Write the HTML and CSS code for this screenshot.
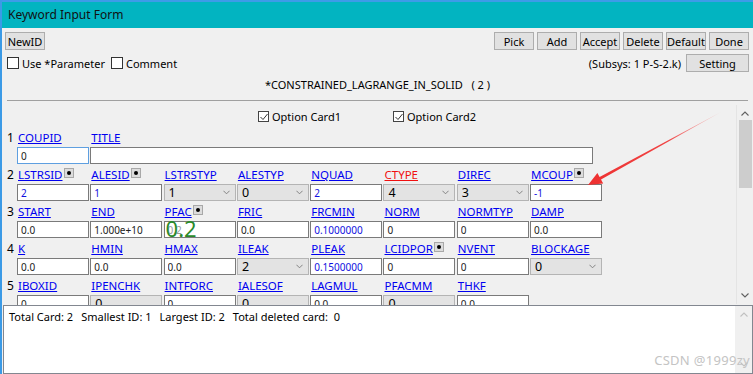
FILE: index.html
```html
<!DOCTYPE html>
<html lang="en">
<head>
    <meta charset="UTF-8">
    <meta name="viewport" content="width=device-width, initial-scale=1.0">
    <title>Keyword Input Form</title>
    <link rel="stylesheet" href="styles.css">
</head>
<body>
    <div class="window">
        <div class="titlebar">Keyword Input Form</div>

        <div class="toolbar">
            <button class="btn newid">NewID</button>
            <div class="btn-group">
                <button class="btn">Pick</button>
                <button class="btn">Add</button>
                <button class="btn">Accept</button>
                <button class="btn">Delete</button>
                <button class="btn">Default</button>
                <button class="btn">Done</button>
            </div>
        </div>

        <div class="optbar">
            <label class="check first"><span class="box"></span>Use *Parameter</label>
            <label class="check"><span class="box"></span>Comment</label>
            <span class="subsys">(Subsys: 1 P-S-2.k)</span>
            <button class="btn setting">Setting</button>
        </div>

        <div class="kwtitle">*CONSTRAINED_LAGRANGE_IN_SOLID &nbsp;&nbsp;( 2 )</div>
        <div class="sep"></div>

        <div class="cards">
            <div class="cards-body">
                <div class="options">
                    <label class="check"><span class="box checked"><svg viewBox="0 0 10 10"><polyline points="1.5,5 4,7.5 8.5,2"/></svg></span>Option Card1</label>
                    <label class="check"><span class="box checked"><svg viewBox="0 0 10 10"><polyline points="1.5,5 4,7.5 8.5,2"/></svg></span>Option Card2</label>
                </div>

                <!-- card 1 -->
                <div class="card-labels">
                    <span class="num">1</span>
                    <span class="lbl"><u>COUPID</u></span>
                    <span class="lbl"><u>TITLE</u></span>
                </div>
                <div class="card-fields">
                    <input class="fld focus" value="0">
                    <input class="fld title" value="">
                </div>

                <!-- card 2 -->
                <div class="card-labels">
                    <span class="num">2</span>
                    <span class="lbl"><u>LSTRSID</u><span class="dot"></span></span>
                    <span class="lbl"><u>ALESID</u><span class="dot"></span></span>
                    <span class="lbl"><u>LSTRSTYP</u></span>
                    <span class="lbl"><u>ALESTYP</u></span>
                    <span class="lbl"><u>NQUAD</u></span>
                    <span class="lbl red"><u>CTYPE</u></span>
                    <span class="lbl"><u>DIREC</u></span>
                    <span class="lbl"><u>MCOUP</u><span class="dot"></span></span>
                </div>
                <div class="card-fields">
                    <input class="fld blue" value="2">
                    <input class="fld blue" value="1">
                    <div class="combo"><span>1</span><svg viewBox="0 0 8 5"><polyline points="0.5,0.5 4,4 7.5,0.5"/></svg></div>
                    <div class="combo"><span>0</span><svg viewBox="0 0 8 5"><polyline points="0.5,0.5 4,4 7.5,0.5"/></svg></div>
                    <input class="fld blue" value="2">
                    <div class="combo"><span>4</span><svg viewBox="0 0 8 5"><polyline points="0.5,0.5 4,4 7.5,0.5"/></svg></div>
                    <div class="combo"><span>3</span><svg viewBox="0 0 8 5"><polyline points="0.5,0.5 4,4 7.5,0.5"/></svg></div>
                    <input class="fld blue" value="-1">
                </div>

                <!-- card 3 -->
                <div class="card-labels">
                    <span class="num">3</span>
                    <span class="lbl"><u>START</u></span>
                    <span class="lbl"><u>END</u></span>
                    <span class="lbl"><u>PFAC</u><span class="dot"></span></span>
                    <span class="lbl"><u>FRIC</u></span>
                    <span class="lbl"><u>FRCMIN</u></span>
                    <span class="lbl"><u>NORM</u></span>
                    <span class="lbl"><u>NORMTYP</u></span>
                    <span class="lbl"><u>DAMP</u></span>
                </div>
                <div class="card-fields">
                    <input class="fld" value="0.0">
                    <input class="fld" value="1.000e+10">
                    <div class="note-cell">
                        <input class="fld faint" value="0.2">
                        <span class="note">0.2</span>
                    </div>
                    <input class="fld" value="0.0">
                    <input class="fld blue" value="0.1000000">
                    <input class="fld" value="0">
                    <input class="fld" value="0">
                    <input class="fld" value="0.0">
                </div>

                <!-- card 4 -->
                <div class="card-labels">
                    <span class="num">4</span>
                    <span class="lbl"><u>K</u></span>
                    <span class="lbl"><u>HMIN</u></span>
                    <span class="lbl"><u>HMAX</u></span>
                    <span class="lbl"><u>ILEAK</u></span>
                    <span class="lbl"><u>PLEAK</u></span>
                    <span class="lbl"><u>LCIDPOR</u><span class="dot"></span></span>
                    <span class="lbl"><u>NVENT</u></span>
                    <span class="lbl"><u>BLOCKAGE</u></span>
                </div>
                <div class="card-fields">
                    <input class="fld" value="0.0">
                    <input class="fld" value="0.0">
                    <input class="fld" value="0.0">
                    <div class="combo"><span>2</span><svg viewBox="0 0 8 5"><polyline points="0.5,0.5 4,4 7.5,0.5"/></svg></div>
                    <input class="fld blue" value="0.1500000">
                    <input class="fld" value="0">
                    <input class="fld" value="0">
                    <div class="combo"><span>0</span><svg viewBox="0 0 8 5"><polyline points="0.5,0.5 4,4 7.5,0.5"/></svg></div>
                </div>

                <!-- card 5 -->
                <div class="card-labels">
                    <span class="num">5</span>
                    <span class="lbl"><u>IBOXID</u></span>
                    <span class="lbl"><u>IPENCHK</u></span>
                    <span class="lbl"><u>INTFORC</u></span>
                    <span class="lbl"><u>IALESOF</u></span>
                    <span class="lbl"><u>LAGMUL</u></span>
                    <span class="lbl"><u>PFACMM</u></span>
                    <span class="lbl"><u>THKF</u></span>
                </div>
                <div class="card-fields">
                    <input class="fld" value="0">
                    <div class="combo"><span>0</span></div>
                    <input class="fld" value="0">
                    <div class="combo"><span>0</span></div>
                    <input class="fld" value="0.0">
                    <div class="combo"><span>0</span></div>
                    <input class="fld" value="0.0">
                </div>
            </div>

            <div class="vscroll">
                <svg class="arr" viewBox="0 0 8 5"><polyline points="0.5,4.5 4,1 7.5,4.5"/></svg>
                <div class="thumb"></div>
                <svg class="arr down" viewBox="0 0 8 5"><polyline points="0.5,0.5 4,4 7.5,0.5"/></svg>
            </div>
        </div>

        <div class="info">
            <div class="info-text">
                <span>Total Card: 2</span>
                <span>Smallest ID: 1</span>
                <span>Largest ID: 2</span>
                <span>Total deleted card: &nbsp;0</span>
            </div>
            <div class="vscroll light">
                <svg class="arr" viewBox="0 0 8 5"><polyline points="0.5,4.5 4,1 7.5,4.5"/></svg>
                <svg class="arr down" viewBox="0 0 8 5"><polyline points="0.5,0.5 4,4 7.5,0.5"/></svg>
            </div>
            <span class="watermark">CSDN @1999zy</span>
        </div>
    </div>

    <!-- red annotation arrow drawn over the form -->
    <svg class="arrow" width="753" height="374" viewBox="0 0 753 374">
        <defs>
            <linearGradient id="fade" x1="588" y1="185" x2="722" y2="112" gradientUnits="userSpaceOnUse">
                <stop offset="0" stop-color="#ee3030"/>
                <stop offset="0.6" stop-color="#f04444"/>
                <stop offset="1" stop-color="#f5a0a0" stop-opacity="0.5"/>
            </linearGradient>
        </defs>
        <polygon points="588,185 597.4,173 599.6,177 721,112 601,179.6 603.2,183.6" fill="url(#fade)"/>
    </svg>
</body>
</html>
```

FILE: styles.css
```css
body {
    margin: 0;
    background: #f0f0f0;
    font-family: "Noto Sans", "Open Sans", sans-serif;
    font-size: 11px;
    color: #000;
    width: 753px;
    height: 374px;
    overflow: hidden;
    position: relative;
}

.window {
    border-left: 2px solid #3b9ae6;
    height: 374px;
    box-sizing: border-box;
}

.titlebar {
    height: 28px;
    box-sizing: border-box;
    border-top: 2px solid #3d9be8;
    background: #02b4c1;
    padding-left: 6px;
    line-height: 25px;
    font-size: 12px;
    color: #111;
}

.btn {
    font-family: inherit;
    font-size: 11px;
    height: 18px;
    padding: 0;
    background: #e1e1e1;
    border: 1px solid #adadad;
    color: #000;
    line-height: 15px;
}

.toolbar {
    display: flex;
    justify-content: space-between;
    padding: 4px 4px 0 3px;
    height: 22px;
    box-sizing: border-box;
}

.newid {
    width: 40px;
}

.btn-group {
    display: flex;
    gap: 3px;
}

.btn-group .btn {
    width: 40px;
}

.optbar {
    display: flex;
    align-items: center;
    height: 22px;
    padding: 0 4px 0 5px;
    margin-top: 2px;
}

.check {
    display: flex;
    align-items: center;
    margin-right: 12px;
}

.check.first {
    margin-right: 6px;
}

.box {
    width: 12px;
    height: 12px;
    box-sizing: border-box;
    border: 1px solid #333;
    background: #fff;
    margin-right: 3px;
}

.box svg {
    display: block;
    width: 10px;
    height: 10px;
    fill: none;
    stroke: #333;
    stroke-width: 1;
}

.subsys {
    margin-left: auto;
    margin-right: 5px;
}

.setting {
    width: 63px;
}

.kwtitle {
    text-align: center;
    height: 20px;
    line-height: 20px;
    margin-top: 1px;
}

.sep {
    height: 1px;
    background: #a0a0a0;
    margin: 5px 5px 4px 5px;
}

.cards {
    display: flex;
    height: 200px;
    overflow: hidden;
}

.cards-body {
    flex: 1;
    padding-left: 5px;
}

.options {
    display: flex;
    height: 23px;
    align-items: center;
    padding-left: 251px;
}

.options .check {
    margin-right: 52px;
}

.options .box {
    width: 11px;
    height: 11px;
    border-color: #444;
}

.card-labels {
    display: grid;
    grid-template-columns: 10px repeat(8, 73.3px);
    height: 19px;
    align-items: center;
}

.num {
    font-size: 12px;
}

.lbl {
    display: flex;
    align-items: flex-start;
    height: 19px;
    line-height: 19px;
    padding-left: 1px;
    font-size: 11.5px;
    color: #0000f0;
}

.lbl.red {
    color: #f01010;
}

.dot {
    width: 10px;
    height: 10px;
    box-sizing: border-box;
    border: 1px solid #a8a8a8;
    background: #dcdcdc;
    margin: 3px 0 0 1px;
    display: flex;
    align-items: center;
    justify-content: center;
}

.dot::after {
    content: "";
    width: 4px;
    height: 4px;
    border-radius: 50%;
    background: #000;
}

.card-fields {
    display: grid;
    grid-template-columns: repeat(8, 73.3px);
    padding-left: 10px;
    height: 17px;
    margin-bottom: 1px;
}

.fld {
    width: 72px;
    height: 17px;
    box-sizing: border-box;
    border: 1px solid #7a7a7a;
    background: #fff;
    padding: 0 3px;
    font-family: "Noto Sans", sans-serif;
    font-size: 10px;
    color: #222;
    outline: none;
    margin: 0;
}

.fld.blue {
    color: #1010e0;
}

.fld.focus {
    border-color: #5e9fe0;
}

.fld.title {
    width: 503px;
    grid-column: span 7;
}

.fld.faint {
    color: #9a9a9a;
}

.combo {
    width: 72px;
    height: 17px;
    box-sizing: border-box;
    border: 1px solid #b4b4b4;
    background: #e3e3e3;
    display: flex;
    align-items: center;
    justify-content: space-between;
    padding: 0 5px 0 4px;
    font-size: 12.5px;
}

.combo svg {
    width: 7px;
    height: 5px;
    fill: none;
    stroke: #777;
    stroke-width: 1;
}

.note-cell {
    position: relative;
}

.note {
    position: absolute;
    left: 2px;
    top: -5px;
    font-size: 22px;
    line-height: 24px;
    color: #2a8a2a;
}

.vscroll {
    width: 17px;
    border-left: 1px solid #e4e4e4;
    display: flex;
    flex-direction: column;
    align-items: center;
    box-sizing: border-box;
    height: 199px;
}

.vscroll .arr {
    width: 8px;
    height: 5px;
    fill: none;
    stroke: #606060;
    stroke-width: 1.1;
    margin-top: 6px;
}

.vscroll .arr.down {
    margin-top: auto;
    margin-bottom: 6px;
}

.thumb {
    width: 13px;
    height: 68px;
    background: #cdcdcd;
    margin-top: 4px;
}

.info {
    height: 69px;
    box-sizing: border-box;
    border: 1px solid #828790;
    background: #fff;
    display: flex;
    position: relative;
    margin-left: 1px;
}

.info-text {
    flex: 1;
    padding: 2px 0 0 5px;
    display: flex;
    gap: 8px;
    height: 18px;
    line-height: 18px;
}

.info .vscroll {
    height: 67px;
    border-left: none;
    background: #f0f0f0;
}

.vscroll.light .arr {
    stroke: #c0c0c0;
}

.watermark {
    position: absolute;
    right: 2px;
    bottom: 4px;
    font-size: 13px;
    color: #c4c4c4;
    letter-spacing: 0.3px;
}

.arrow {
    position: absolute;
    left: 0;
    top: 0;
    pointer-events: none;
}
```
